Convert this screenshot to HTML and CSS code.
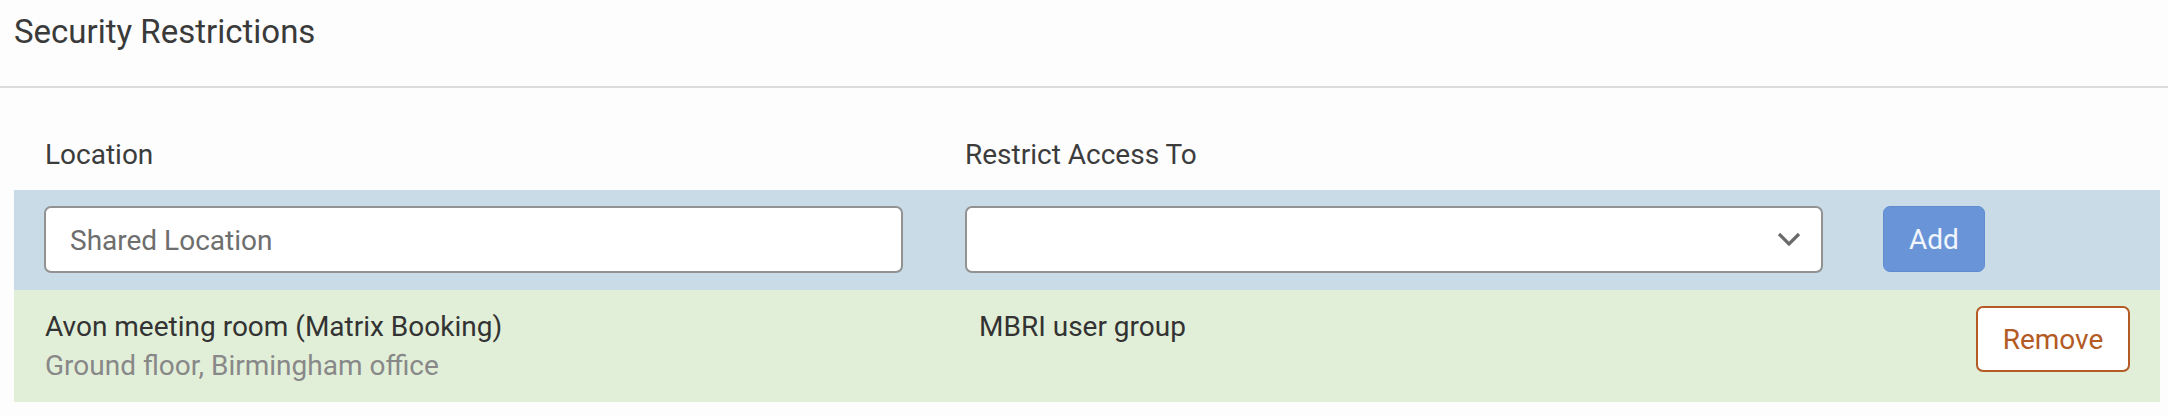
FILE: index.html
```html
<!DOCTYPE html>
<html lang="en">
<head>
<meta charset="UTF-8">
<meta name="viewport" content="width=device-width, initial-scale=1.0">
<title>Security Restrictions</title>
<link rel="stylesheet" href="styles.css">
</head>
<body>

<div class="panel">
    <h2 class="panel-title">Security Restrictions</h2>

    <div class="panel-body">
        <!-- Column headings -->
        <div class="grid labels">
            <div>Location</div>
            <div>Restrict Access To</div>
        </div>

        <!-- Form to add a new restriction -->
        <form class="grid add-row" id="formRestriction">
            <input type="text" class="field" id="location" placeholder="Shared Location">
            <div class="select-wrap">
                <select class="field" id="group">
                    <option value=""></option>
                    <option>MBRI user group</option>
                </select>
                <svg class="chevron" width="24" height="15" viewBox="0 0 24 15">
                    <path d="M2 2 L12 12 L22 2" fill="none" stroke="#6b6b6b" stroke-width="3.2"/>
                </svg>
            </div>
            <button type="submit" class="btn btn-add">Add</button>
        </form>

        <!-- Existing restrictions -->
        <div id="restrictionList"></div>
    </div>
</div>

<script>
    let restrictions = [
        { name: "Avon meeting room (Matrix Booking)", place: "Ground floor, Birmingham office", group: "MBRI user group" }
    ];

    function renderRestrictions() {
        const list = document.querySelector("#restrictionList");
        list.innerHTML = "";
        restrictions.forEach((r, index) => {
            list.innerHTML += `
                <div class="restriction-row">
                    <div class="loc">
                        <div class="loc-name">${r.name}</div>
                        <div class="loc-place">${r.place}</div>
                    </div>
                    <div class="loc-group">${r.group}</div>
                    <button class="btn btn-remove" onclick="removeRestriction(${index})">Remove</button>
                </div>
            `;
        });
    }

    document.querySelector("#formRestriction").addEventListener("submit", function(event) {
        event.preventDefault();
        const name = document.querySelector("#location").value;
        const group = document.querySelector("#group").value;
        if (!name || !group) return;
        restrictions.push({ name, place: "", group });
        renderRestrictions();
        this.reset();
    });

    function removeRestriction(index) {
        restrictions.splice(index, 1);
        renderRestrictions();
    }

    renderRestrictions();
</script>

</body>
</html>
```

FILE: styles.css
```css
body {
    margin: 0;
    background-color: #fcfdfc;
    font-family: Roboto, "Liberation Sans", sans-serif;
    font-size: 28px;
    color: #333;
}
.panel-title {
    margin: 0;
    padding: 12px 14px 34px;
    font-size: 33px;
    font-weight: 400;
    line-height: 40px;
    color: #3a3a3a;
    border-bottom: 2px solid #dcdcdc;
}
.panel-body {
    padding: 0 8px 0 14px;
}
.grid {
    display: grid;
    grid-template-columns: 921px 918px auto;
    padding-left: 30px;
}
.labels {
    padding-top: 47px;
    padding-bottom: 16px;
    line-height: 39px;
    color: #3c3c3c;
}
.labels div:first-child {
    padding-left: 1px;
}
.add-row {
    background-color: #c9dbe6;
    padding-top: 16px;
    padding-bottom: 17px;
    margin: 0;
}
.field {
    box-sizing: border-box;
    height: 67px;
    border: 2px solid #929292;
    border-radius: 7px;
    background-color: #fff;
    font-family: inherit;
    font-size: 28px;
    color: #333;
    outline: none;
}
input.field {
    width: 859px;
    padding: 2px 24px 0;
}
input.field::placeholder {
    color: #6e6e6e;
}
.select-wrap {
    position: relative;
    width: 858px;
}
select.field {
    width: 100%;
    padding: 0 60px 0 24px;
    appearance: none;
    -webkit-appearance: none;
}
.chevron {
    position: absolute;
    right: 22px;
    top: 26px;
    pointer-events: none;
}
.btn {
    box-sizing: border-box;
    height: 66px;
    font-family: inherit;
    font-size: 28px;
    border-radius: 7px;
    cursor: pointer;
}
.btn-add {
    width: 102px;
    background-color: #6995d8;
    border: 1px solid #5f8bd0;
    color: #f2f6fc;
    padding: 0;
}
.restriction-row {
    display: grid;
    grid-template-columns: 934px 1fr auto;
    align-items: start;
    background-color: #e2efd8;
    padding: 16px 30px 17px 31px;
}
.loc, .loc-group {
    padding-top: 1px;
    line-height: 39px;
}
.loc-name, .loc-group {
    color: #333;
}
.loc-place {
    color: #888;
}
.btn-remove {
    width: 154px;
    background-color: #fff;
    border: 2px solid #b45a24;
    color: #b45a24;
    padding: 0;
}
```
